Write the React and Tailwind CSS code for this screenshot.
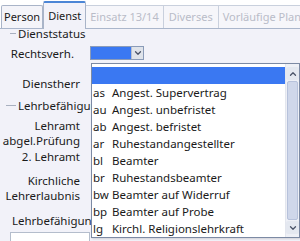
import { ChevronDown, ChevronUp } from 'lucide-react';

const items = [
  ['as', 'Angest. Supervertrag'],
  ['au', 'Angest. unbefristet'],
  ['ab', 'Angest. befristet'],
  ['ar', 'Ruhestandangestellter'],
  ['bl', 'Beamter'],
  ['br', 'Ruhestandsbeamter'],
  ['bw', 'Beamter auf Widerruf'],
  ['bp', 'Beamter auf Probe'],
  ['lg', 'Kirchl. Religionslehrkraft'],
];

const Label = ({ children, className = '' }) => (
  <div className={`w-[80px] text-right leading-[15px] whitespace-nowrap ${className}`}>{children}</div>
);

const App = () => {
  return (
    <div className="relative w-[300px] h-[241px] overflow-hidden bg-[#f2f2f9] text-[11.5px] text-[#1a1a1a] font-['Noto_Sans',sans-serif]">
      {/* tabs */}
      <div className="flex items-end h-[29px] bg-white border-b border-[#aab6cb] pl-[1px] text-[11px] whitespace-nowrap">
        <div className="h-[23px] px-[2px] flex items-center border border-b-0 border-[#a9b4c8] bg-[#f4f4f9] rounded-t-[2px]">Person</div>
        <div className="h-[28px] px-[4px] -mb-[1px] flex items-center bg-[#f2f2f9] border border-b-0 border-[#a9b4c8] border-t-2 border-t-[#4c86d6] rounded-t-[2px]">Dienst</div>
        <div className="h-[23px] px-[4px] flex items-center border border-b-0 border-l-0 border-[#c9d0dd] bg-[#f6f6fa] text-[#b9bcc8]">Einsatz 13/14</div>
        <div className="h-[23px] px-[5px] flex items-center border border-b-0 border-l-0 border-[#c9d0dd] bg-[#f6f6fa] text-[#b9bcc8]">Diverses</div>
        <div className="h-[23px] px-[4px] flex items-center border border-b-0 border-l-0 border-[#c9d0dd] bg-[#f6f6fa] text-[#b9bcc8]">Vorläufige Planung</div>
      </div>

      {/* form */}
      <div className="flex flex-col">
        <div className="flex items-center h-[11px] mt-[-1px] pl-[10px]">
          <div className="w-[6px] h-px bg-[#a8b0c0] mr-[2px]" />
          <span>Dienststatus</span>
        </div>

        <div className="flex items-center h-[18px] mt-[5px]">
          <Label className="pr-[6px]">Rechtsverh.</Label>
          <div className="ml-[10px] flex h-[14px] w-[54px] border border-[#8a9bb8] bg-white">
            <div className="flex-1 bg-[#3a78f2]" />
            <div className="w-[12px] flex items-center justify-center bg-[#dfe3ea] border-l border-[#b6bfd0]">
              <ChevronDown size={10} strokeWidth={3} className="text-[#4a5368]" />
            </div>
          </div>
        </div>

        <div className="flex items-center h-[18px] mt-[12px]">
          <Label>Dienstherr</Label>
        </div>

        <div className="flex items-center h-[15px] mt-[6px] pl-[6px]">
          <div className="w-[10px] h-px bg-[#a8b0c0] mr-[2px]" />
          <span>Lehrbefähigung</span>
        </div>

        <div className="flex flex-col mt-[5px]">
          <Label>Lehramt</Label>
          <Label>abgel.Prüfung</Label>
        </div>
        <div className="flex flex-col mt-[1px]">
          <Label>2. Lehramt</Label>
        </div>
        <div className="flex flex-col mt-[9px]">
          <Label>Kirchliche</Label>
          <Label>Lehrerlaubnis</Label>
        </div>
        <div className="mt-[10px] pl-[12px] leading-[15px] whitespace-nowrap">Lehrbefähigung</div>
        <div className="mt-[4px] ml-[10px] w-[80px] h-[10px] border border-[#b4bdcc] bg-white" />
      </div>

      {/* open dropdown list */}
      <div className="absolute left-[91px] top-[63px] w-[209px] h-[175px] bg-white border border-[#7c8aa4] flex shadow-[1px_1px_2px_rgba(0,0,0,0.15)]">
        <div className="flex-1 flex flex-col pt-[3px]">
          <div className="h-[17px] bg-[#3a78f2]" />
          {items.map(([code, name]) => (
            <div key={code} className="h-[17px] flex items-center whitespace-nowrap">
              <span className="w-[20px] pl-[1px]">{code}</span>
              <span>{name}</span>
            </div>
          ))}
        </div>
        <div className="w-[14px] flex flex-col bg-[#eef0f6] border-l border-[#e3e6ee] py-[3px]">
          <div className="h-[13px] flex items-center justify-center bg-[#e4e8f0] rounded-[2px]">
            <ChevronUp size={10} strokeWidth={3} className="text-[#4a5368]" />
          </div>
          <div className="flex-1 mx-[1px] my-[1px] rounded-[2px] bg-[#cfd7ea] border border-[#b7c2db]" />
          <div className="h-[13px] flex items-center justify-center bg-[#e4e8f0] rounded-[2px]">
            <ChevronDown size={10} strokeWidth={3} className="text-[#4a5368]" />
          </div>
        </div>
      </div>
    </div>
  );
};

export default App;
